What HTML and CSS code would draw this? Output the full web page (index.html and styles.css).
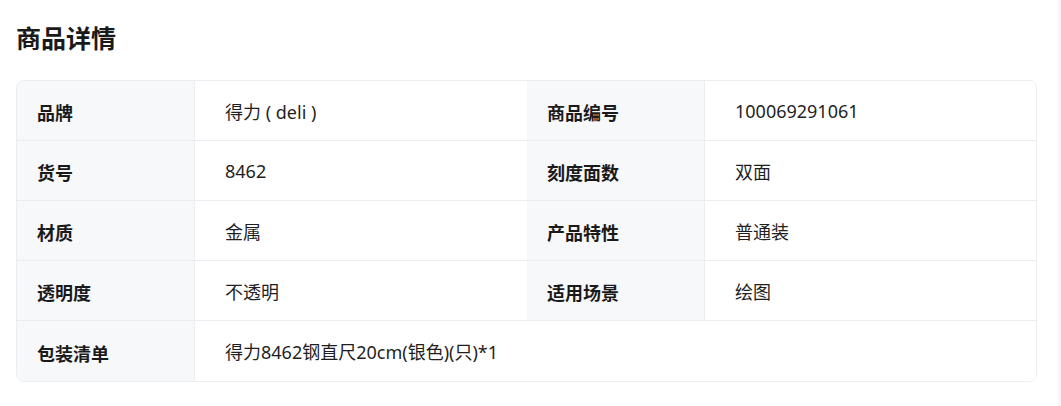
FILE: index.html
```html
<!DOCTYPE html>
<html lang="zh-CN">
<head>
<meta charset="utf-8">
<title>商品详情</title>
<link rel="stylesheet" href="styles.css">
</head>
<body>
<main class="page">
  <h2 class="title">商品详情</h2>
  <div class="spec">
    <div class="label">品牌</div>
    <div class="value">得力 ( deli )</div>
    <div class="label">商品编号</div>
    <div class="value">100069291061</div>

    <div class="label">货号</div>
    <div class="value">8462</div>
    <div class="label">刻度面数</div>
    <div class="value">双面</div>

    <div class="label">材质</div>
    <div class="value">金属</div>
    <div class="label">产品特性</div>
    <div class="value">普通装</div>

    <div class="label">透明度</div>
    <div class="value">不透明</div>
    <div class="label">适用场景</div>
    <div class="value">绘图</div>

    <div class="label last">包装清单</div>
    <div class="value wide last">得力8462钢直尺20cm(银色)(只)*1</div>
  </div>
</main>
</body>
</html>
```

FILE: styles.css
```css
html, body {
  margin: 0;
  padding: 0;
}
body {
  background: #f5f5fa;
  font-family: "Noto Sans", "Noto Sans CJK SC", sans-serif;
  color: #1f1f1f;
}
.page {
  width: 1058px;
  height: 406px;
  background: #ffffff;
  box-sizing: border-box;
  padding: 14px 16px 0 16px;
  display: flex;
  flex-direction: column;
}
.title {
  margin: 0;
  font-size: 25px;
  line-height: 48px;
  font-weight: 700;
  color: #1a1a1a;
}
.spec {
  margin-top: 18px;
  width: 1021px;
  box-sizing: border-box;
  border: 1px solid #ebedf0;
  border-radius: 8px;
  overflow: hidden;
  display: grid;
  grid-template-columns: 178px 332px 178px 331px;
  grid-auto-rows: 60px;
}
.label, .value {
  display: flex;
  align-items: center;
  box-sizing: border-box;
  border-bottom: 1px solid #ebedf0;
  font-size: 18px;
}
.label {
  background: #f7f8fa;
  border-right: 1px solid #ebedf0;
  padding-left: 20px;
  padding-top: 3px;
  font-weight: 700;
  color: #1a1a1a;
}
.value {
  background: #ffffff;
  padding-left: 30px;
  font-weight: 400;
}
.wide {
  grid-column: span 3;
}
.last {
  border-bottom: none;
}
```
